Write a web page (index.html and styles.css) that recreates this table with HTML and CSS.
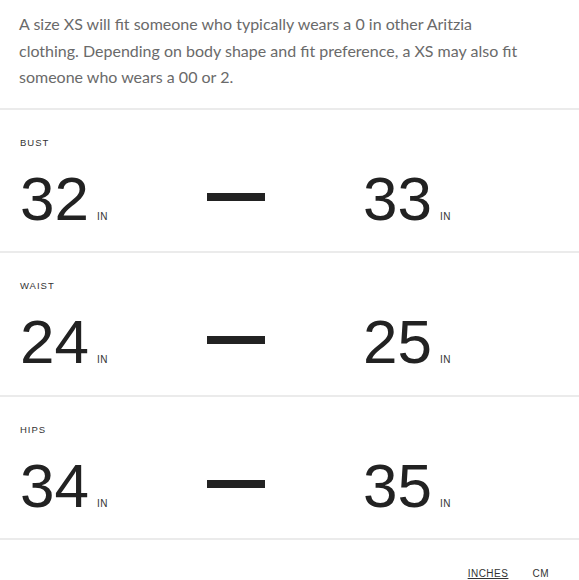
FILE: index.html
```html
<!DOCTYPE html>
<html lang="en">
<head>
<meta charset="utf-8">
<title>Size guide</title>
<link rel="stylesheet" href="styles.css">
</head>
<body>
<div class="guide">
  <p class="intro">A size XS will fit someone who typically wears a 0 in other Aritzia clothing. Depending on body shape and fit preference, a XS may also fit someone who wears a 00 or 2.</p>

  <section class="measure">
    <div class="label">BUST</div>
    <div class="range">
      <div class="value"><span class="num">32</span><span class="unit">IN</span></div>
      <span class="dash"></span>
      <div class="value"><span class="num">33</span><span class="unit">IN</span></div>
    </div>
  </section>

  <section class="measure">
    <div class="label">WAIST</div>
    <div class="range">
      <div class="value"><span class="num">24</span><span class="unit">IN</span></div>
      <span class="dash"></span>
      <div class="value"><span class="num">25</span><span class="unit">IN</span></div>
    </div>
  </section>

  <section class="measure">
    <div class="label">HIPS</div>
    <div class="range">
      <div class="value"><span class="num">34</span><span class="unit">IN</span></div>
      <span class="dash"></span>
      <div class="value"><span class="num">35</span><span class="unit">IN</span></div>
    </div>
  </section>

  <div class="units">
    <span class="unit-opt active">INCHES</span>
    <span class="unit-opt">CM</span>
  </div>
</div>
</body>
</html>
```

FILE: styles.css
```css
html, body {
  margin: 0;
  padding: 0;
  background: #fff;
}

.guide {
  font-family: "Liberation Sans", Arial, sans-serif;
  color: #222;
}

.intro {
  margin: 0;
  padding: 11px 20px 17px 19px;
  max-width: 500px;
  font-family: "Lato", "Liberation Sans", sans-serif;
  font-size: 16px;
  line-height: 26.5px;
  color: #6a6a6a;
}

.measure {
  border-top: 2px solid #ebebeb;
  padding: 27px 0 21.67px 20px;
}

.label {
  font-size: 9.5px;
  line-height: 12px;
  letter-spacing: 1px;
  color: #333;
}

.range {
  margin-top: 19px;
  width: 431px;
  display: flex;
  justify-content: space-between;
  align-items: center;
}

.value {
  display: flex;
  align-items: baseline;
}

.num {
  font-size: 62px;
  line-height: 62px;
  color: #222;
}

.unit {
  margin-left: 8px;
  font-size: 10px;
  letter-spacing: 0.5px;
  color: #333;
}

.dash {
  width: 58px;
  height: 8px;
  background: #222;
  margin-bottom: 4px;
}

.units {
  border-top: 2px solid #ebebeb;
  display: flex;
  justify-content: flex-end;
  gap: 24px;
  padding: 28px 30px 0 0;
  font-size: 10px;
  line-height: 12px;
  letter-spacing: 0.5px;
  color: #333;
}

.unit-opt.active {
  text-decoration: underline;
  text-decoration-thickness: 1px;
  text-underline-offset: 1px;
}
```
